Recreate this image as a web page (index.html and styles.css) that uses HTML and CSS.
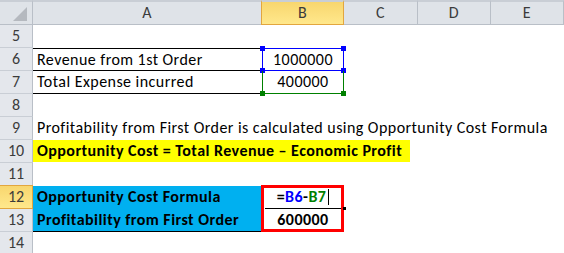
FILE: index.html
```html
<!DOCTYPE html>
<html lang="en">
<head>
    <meta charset="UTF-8">
    <meta name="viewport" content="width=device-width, initial-scale=1.0">
    <title>Opportunity Cost</title>
    <link rel="stylesheet" href="styles.css">
</head>
<body>
    <div class="sheet">
        <!--Column headers-->
        <div class="hd corner"><span class="tri"></span></div>
        <div class="hd">A</div>
        <div class="hd sel">B</div>
        <div class="hd">C</div>
        <div class="hd">D</div>
        <div class="hd">E</div>

        <div class="rh">5</div>
        <div class="c"></div><div class="c"></div><div class="c"></div><div class="c"></div><div class="c"></div>

        <div class="rh">6</div>
        <div class="c txt line-top line-bottom">Revenue from 1st Order</div>
        <div class="c num ref-blue">1000000
            <i class="handle blue tl"></i><i class="handle blue tr"></i>
            <i class="handle blue bl"></i><i class="handle blue br"></i>
        </div>
        <div class="c"></div><div class="c"></div><div class="c"></div>

        <div class="rh">7</div>
        <div class="c txt line-bottom">Total Expense incurred</div>
        <div class="c num ref-green">400000
            <i class="handle green bl"></i><i class="handle green br"></i>
        </div>
        <div class="c"></div><div class="c"></div><div class="c"></div>

        <div class="rh">8</div>
        <div class="c"></div><div class="c"></div><div class="c"></div><div class="c"></div><div class="c"></div>

        <div class="rh">9</div>
        <div class="c txt wide">Profitability from First Order is calculated using Opportunity Cost Formula</div>

        <div class="rh">10</div>
        <div class="c txt span3"><span class="mark">Opportunity Cost = Total Revenue – Economic Profit</span></div>
        <div class="c"></div><div class="c"></div>

        <div class="rh">11</div>
        <div class="c"></div><div class="c"></div><div class="c"></div><div class="c"></div><div class="c"></div>

        <div class="rh sel">12</div>
        <div class="c txt bold fill">Opportunity Cost Formula</div>
        <div class="c num bold line-bottom b12"><span>=<b class="blue-t">B6</b>-<b class="green-t">B7</b></span><i class="caret"></i></div>
        <div class="c"></div><div class="c"></div><div class="c"></div>

        <div class="rh">13</div>
        <div class="c txt bold fill line-bottom">Profitability from First Order</div>
        <div class="c num bold b13">600000</div>
        <div class="c"></div><div class="c"></div><div class="c"></div>

        <div class="rh">14</div>
        <div class="c"></div><div class="c"></div><div class="c"></div><div class="c"></div><div class="c"></div>

        <!--Active range outline-->
        <div class="outline"><i class="fill-handle"></i></div>
    </div>
</body>
</html>
```

FILE: styles.css
```css
body {
    margin: 0;
    background-color: #ffffff;
    overflow: hidden;
    font-family: Calibri, Carlito, Lato, sans-serif;
    font-size: 16px;
    letter-spacing: 0.45px;
    color: #000000;
}
.sheet {
    display: grid;
    grid-template-columns: 33px 229px 82px 74px 73px 73px;
    grid-template-rows: 25px repeat(10, 23px);
}
.hd {
    box-sizing: border-box;
    background-color: #dfe3e8;
    border-top: 2px solid #c9ced5;
    border-right: 1px solid #b9bfc7;
    border-bottom: 1px solid #b9bfc7;
    color: #3b3b3b;
    text-align: center;
    line-height: 22px;
}
.hd.sel {
    background: linear-gradient(#f8d66e, #ffe88c);
    border-right-color: #e2a63f;
    border-bottom-color: #e2a63f;
    border-left: 1px solid #e2a63f;
    margin-left: -1px;
}
.corner {
    position: relative;
}
.tri {
    position: absolute;
    right: 5px;
    bottom: 3px;
    width: 0;
    height: 0;
    border-left: 14px solid transparent;
    border-bottom: 14px solid #b5b9bf;
}
.rh {
    box-sizing: border-box;
    background-color: #e4e7ec;
    border-right: 1px solid #b9bfc7;
    border-bottom: 1px solid #c9ced5;
    color: #3b3b3b;
    text-align: center;
    line-height: 22px;
    letter-spacing: 0;
}
.rh.sel {
    background: linear-gradient(#f8d66e, #ffe88c);
    border-color: #e2a63f;
    border-top: 1px solid #e2a63f;
    margin-top: -1px;
}
.c {
    box-sizing: border-box;
    position: relative;
    line-height: 22px;
    white-space: nowrap;
}
.txt {
    padding-left: 4px;
}
.wide {
    grid-column: 2 / 7;
}
.span3 {
    grid-column: 2 / 5;
    padding-left: 0;
}
.mark {
    display: inline-block;
    box-sizing: border-box;
    width: 377px;
    height: 22px;
    padding-left: 4px;
    background-color: #ffff00;
}
.num {
    text-align: center;
}
.bold,
.mark {
    font-weight: bold;
    letter-spacing: 0.45px;
}
.fill {
    background-color: #00b0f0;
}
.line-top {
    border-top: 1px solid #000000;
}
.line-bottom {
    border-bottom: 1px solid #000000;
}
.ref-blue {
    border: 1px solid #0000ff;
}
.ref-green {
    border: 1px solid #008000;
    border-top: none;
}
.handle {
    position: absolute;
    width: 5px;
    height: 5px;
}
.handle.blue {
    background-color: #0000ff;
}
.handle.green {
    background-color: #008000;
}
.tl { left: -3px; top: -3px; }
.tr { right: -3px; top: -3px; }
.bl { left: -3px; bottom: -3px; }
.br { right: -3px; bottom: -3px; }
.blue-t {
    color: #0000ff;
}
.green-t {
    color: #008000;
}
.b12 {
    grid-row: 9;
    grid-column: 3;
    margin: 0 3px;
}
.b13 {
    grid-row: 10;
    grid-column: 3;
}
.caret {
    display: inline-block;
    width: 1px;
    height: 16px;
    margin-left: 2px;
    vertical-align: -3px;
    background-color: #000000;
}
.outline {
    grid-row: 9 / 11;
    grid-column: 3;
    box-sizing: border-box;
    position: relative;
    margin: -1px 0 0 -1px;
    border: 3px solid #ff0000;
}
.fill-handle {
    position: absolute;
    right: -5px;
    top: 19px;
    width: 3px;
    height: 3px;
    background-color: #000000;
}
```
